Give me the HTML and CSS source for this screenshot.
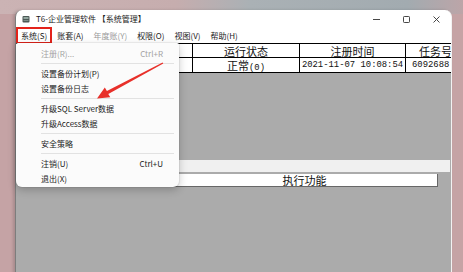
FILE: index.html
```html
<!DOCTYPE html>
<html lang="zh">
<head>
<meta charset="utf-8">
<title>T6-企业管理软件</title>
<link rel="stylesheet" href="styles.css">
</head>
<body>
<div class="desktop">
  <div class="window">
    <div class="titlebar">
      <svg class="appicon" viewBox="0 0 8 8" width="8" height="8"><rect x="0.5" y="1" width="7" height="6.5" rx="1" fill="#4c5956"/><rect x="1.5" y="2" width="5" height="2" fill="#93a7a0"/><rect x="1.5" y="5" width="5" height="1" fill="#7d8f89"/></svg>
      <span class="title">T6-企业管理软件 【系统管理】</span>
      <div class="controls">
        <span class="ctl"><svg viewBox="0 0 7 7" width="7" height="7"><path d="M0 3.5h7" stroke="#333" stroke-width="0.9"/></svg></span>
        <span class="ctl"><svg viewBox="0 0 7 7" width="7" height="7"><rect x="0.5" y="0.5" width="6" height="6" rx="0.8" fill="none" stroke="#333" stroke-width="0.9"/></svg></span>
        <span class="ctl"><svg viewBox="0 0 7 7" width="7" height="7"><path d="M0.5 0.5l6 6M6.5 0.5l-6 6" stroke="#333" stroke-width="0.9"/></svg></span>
      </div>
    </div>
    <div class="menubar">
      <span class="mi active">系统(S)</span>
      <span class="mi">账套(A)</span>
      <span class="mi disabled">年度账(Y)</span>
      <span class="mi">权限(O)</span>
      <span class="mi">视图(V)</span>
      <span class="mi">帮助(H)</span>
    </div>
    <div class="client">
      <div class="grid">
        <div class="c h"></div>
        <div class="c h"></div>
        <div class="c h">运行状态</div>
        <div class="c h">注册时间</div>
        <div class="c h">任务号</div>
        <div class="c d"></div>
        <div class="c d"></div>
        <div class="c d"><span class="run">正常<span class="mono">(0)</span></span></div>
        <div class="c d"><span class="mono">2021-11-07 10:08:54</span></div>
        <div class="c d left"><span class="mono">6092688</span></div>
      </div>
      <div class="blank"></div>
      <div class="strip"></div>
      <div class="func"><div class="funcbox">执行功能</div></div>
    </div>
  </div>

  <div class="dropdown">
    <div class="item off"><span>注册(R)...</span><span class="key">Ctrl+R</span></div>
    <div class="sep"></div>
    <div class="item"><span>设置备份计划(P)</span></div>
    <div class="item"><span>设置备份日志</span></div>
    <div class="sep"></div>
    <div class="item"><span>升级SQL Server数据</span></div>
    <div class="item"><span>升级Access数据</span></div>
    <div class="sep"></div>
    <div class="item"><span>安全策略</span></div>
    <div class="sep"></div>
    <div class="item"><span>注销(U)</span><span class="key">Ctrl+U</span></div>
    <div class="item"><span>退出(X)</span></div>
  </div>

  <svg class="arrow" viewBox="0 0 463 272" width="463" height="272">
    <polygon points="162.6,62.4 106.9,91.1 104.8,87.6 97,98.5 110.3,97.2 108.3,93.9 163.3,63.5" fill="#e8302a"/>
  </svg>
</div>
</body>
</html>
```
FILE: styles.css
```css
* { box-sizing: border-box; }
html, body { margin: 0; padding: 0; }
body {
  width: 463px;
  height: 272px;
  overflow: hidden;
  font-family: "Noto Sans CJK SC", "Noto Sans", sans-serif;
}
.desktop {
  position: relative;
  width: 463px;
  height: 272px;
  overflow: hidden;
  background:
    linear-gradient(to right, #cbb3b4 0%, #c6adae 38%, #aab1b5 54%, #a2abb0 88%, #bca5a8 100%) top / 100% 14px no-repeat,
    #c5a3a5;
}
.window {
  position: absolute;
  left: 15px;
  top: 10px;
  width: 437px;
  height: 265px;
  background: #fff;
  border-radius: 7px 7px 0 0;
  border-left: 1px solid #7d7d7d;
  border-right: 1px solid #f2f2f2;
  box-shadow: -2px 0 3px rgba(0, 0, 0, 0.15);
  display: flex;
  flex-direction: column;
  overflow: hidden;
}
.titlebar {
  height: 18px;
  flex: none;
  display: flex;
  align-items: center;
}
.appicon { margin-left: 6px; flex: none; }
.title {
  margin-left: 6px;
  font-size: 8px;
  line-height: 1.2;
  color: #1b1b1b;
  white-space: nowrap;
}
.controls {
  margin-left: auto;
  display: flex;
  height: 100%;
}
.ctl {
  width: 30px;
  display: flex;
  align-items: center;
  justify-content: center;
}
.menubar {
  height: 15px;
  flex: none;
  display: flex;
  align-items: center;
  font-size: 8px;
  line-height: 1.2;
}
.mi {
  height: 15px;
  padding: 0 5px;
  display: flex;
  align-items: center;
  color: #1b1b1b;
  white-space: nowrap;
}
.mi.active {
  border: 2px solid #e3231b;
  padding: 0 3px;
  height: 17px;
  margin: -1px 0;
}
.mi.disabled { color: #9a9a9a; }

.client {
  flex: 1;
  background: #ababab;
  display: flex;
  flex-direction: column;
  overflow: hidden;
}
.grid {
  flex: none;
  display: grid;
  grid-template-columns: 84px 93px 107px 106px 60px;
  border-top: 1px solid #000;
  background: #fff;
  width: 450px;
}
.c {
  border-right: 1px solid #000;
  border-bottom: 1px solid #000;
  display: flex;
  align-items: center;
  justify-content: center;
  font-size: 11px;
  line-height: 12px;
  color: #111;
  white-space: nowrap;
}
.c.h { height: 14px; }
.c.d { height: 15px; }
.c.left { justify-content: flex-start; padding-left: 6px; }
.run { display: block; height: 12px; line-height: 12px; }
.mono {
  font-family: "Liberation Mono", monospace;
  font-size: 8.9px;
  line-height: 12px;
}
.blank { height: 87px; flex: none; }
.strip {
  height: 12px;
  flex: none;
  background: #f0f0f0;
  margin-right: 1px;
}
.func {
  flex: none;
  padding: 2px 13px 0 156px;
}
.funcbox {
  height: 13px;
  background: #fff;
  border-right: 1px solid #676767;
  border-bottom: 1px solid #676767;
  display: flex;
  align-items: center;
  justify-content: center;
  font-size: 11px;
  line-height: 12px;
  color: #111;
}

.dropdown {
  position: absolute;
  left: 16px;
  top: 43px;
  width: 163px;
  height: 144px;
  padding-top: 3px;
  background: #fbfbfb;
  border-radius: 2px 2px 6px 6px;
  box-shadow: 0 3px 8px rgba(0, 0, 0, 0.22), 0 0 0 1px rgba(0, 0, 0, 0.05);
}
.item {
  height: 15px;
  display: flex;
  align-items: center;
  padding: 0 16px 0 25px;
  font-size: 8px;
  line-height: 1.2;
  color: #1b1b1b;
  white-space: nowrap;
}
.item .key { margin-left: auto; }
.item.off { color: #a2a2a2; }
.sep {
  height: 5px;
  display: flex;
  align-items: center;
  margin: 0 5px 0 25px;
}
.sep::before {
  content: "";
  flex: 1;
  height: 1px;
  background: #e2e2e2;
}
.arrow {
  position: absolute;
  left: 0;
  top: 0;
  pointer-events: none;
}
```
